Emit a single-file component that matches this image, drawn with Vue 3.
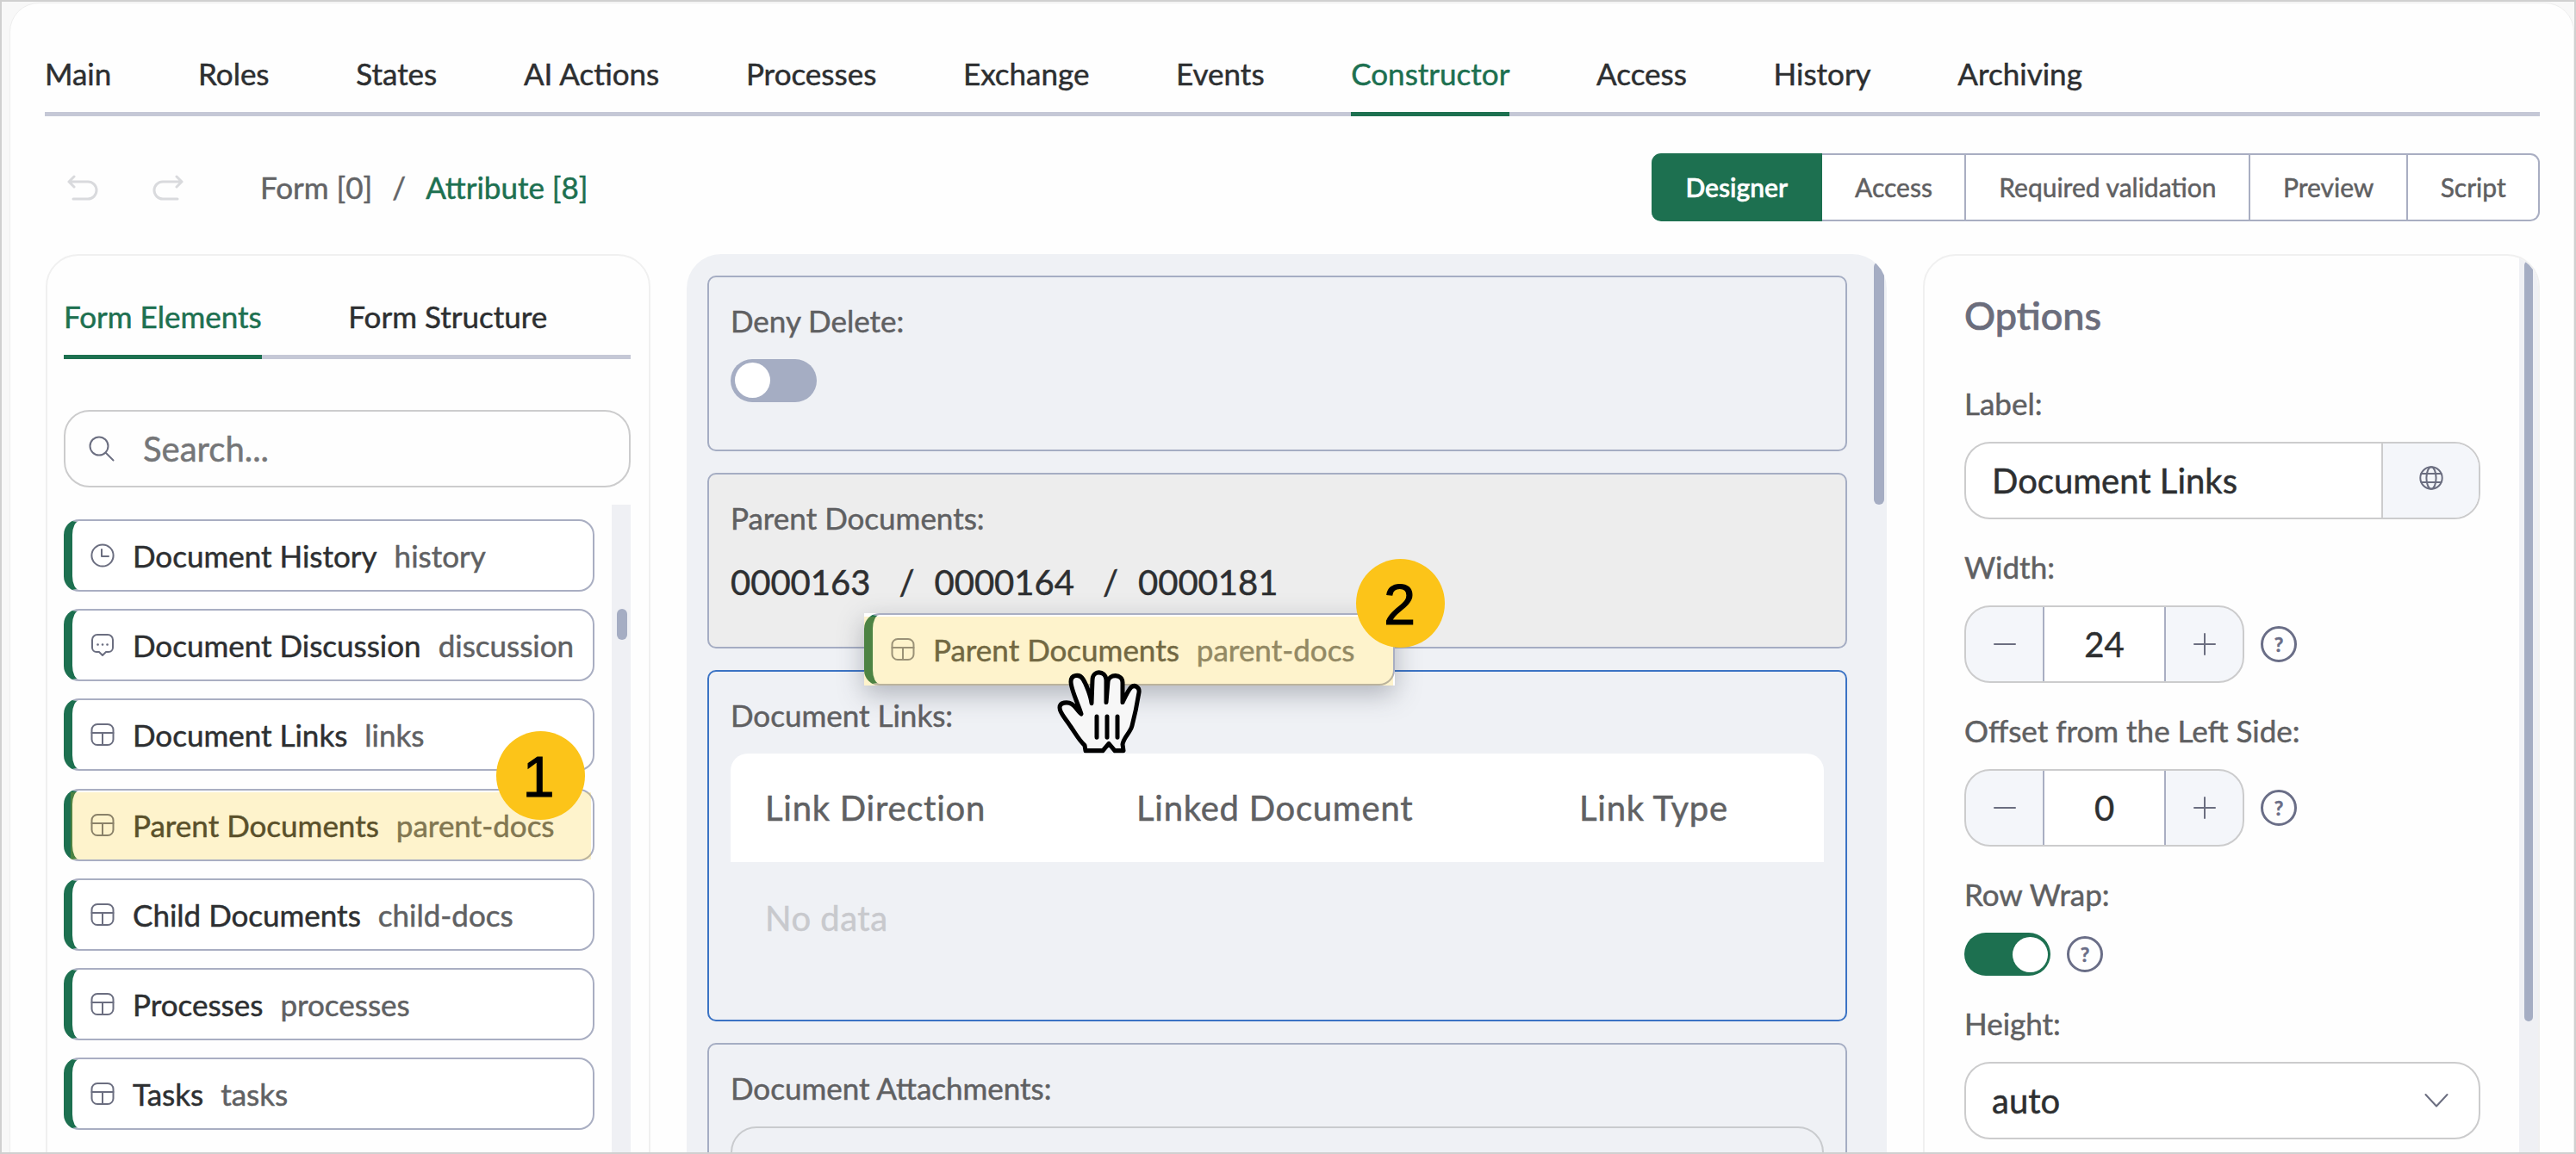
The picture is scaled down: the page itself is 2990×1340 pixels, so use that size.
<script setup>
import { ref } from "vue"

const tabs = ["Main", "Roles", "States", "AI Actions", "Processes", "Exchange", "Events", "Constructor", "Access", "History", "Archiving"]
const activeTab = ref("Constructor")

const modes = ["Designer", "Access", "Required validation", "Preview", "Script"]
const activeMode = ref("Designer")

const panelTabs = ["Form Elements", "Form Structure"]
const activePanelTab = ref("Form Elements")

const elements = [
    { icon: "clock", title: "Document History", code: "history" },
    { icon: "chat", title: "Document Discussion", code: "discussion" },
    { icon: "table", title: "Document Links", code: "links" },
    { icon: "table", title: "Parent Documents", code: "parent-docs", marked: true },
    { icon: "table", title: "Child Documents", code: "child-docs" },
    { icon: "table", title: "Processes", code: "processes" },
    { icon: "table", title: "Tasks", code: "tasks" }
]

const parents = ["0000163", "0000164", "0000181"]

const steppers = ref([
    { label: "Width:", value: 24 },
    { label: "Offset from the Left Side:", value: 0 }
])
</script>

<template>
    <div class="page">
        <div class="sheet">
            <nav class="tabs main-tabs">
                <a v-for="tab in tabs" :key="tab" class="tab" :class="{ active: tab === activeTab }"
                    @click="activeTab = tab">{{ tab }}</a>
            </nav>

            <div class="toolbar">
                <svg class="undo" width="36" height="30" viewBox="0 0 36 30">
                    <path d="M8 2 2 8l6 6M2 8h22a10 10 0 0 1 0 20H7" />
                </svg>
                <svg class="undo redo" width="36" height="30" viewBox="0 0 36 30">
                    <path d="M28 2l6 6-6 6M34 8H12a10 10 0 0 0 0 20h17" />
                </svg>
                <div class="crumbs">
                    <span>Form [0]</span>
                    <span class="slash">/</span>
                    <span class="current">Attribute [8]</span>
                </div>
                <div class="modes">
                    <button v-for="mode in modes" :key="mode" class="mode" :class="{ active: mode === activeMode }"
                        @click="activeMode = mode">{{ mode }}</button>
                </div>
            </div>

            <div class="columns">
                <aside class="panel left">
                    <nav class="tabs">
                        <a v-for="tab in panelTabs" :key="tab" class="tab" :class="{ active: tab === activePanelTab }"
                            @click="activePanelTab = tab">{{ tab }}</a>
                    </nav>
                    <div class="search">
                        <svg width="30" height="30" viewBox="0 0 30 30">
                            <circle cx="12" cy="12" r="10.5" />
                            <path d="M19.5 19.5 28.5 28.5" />
                        </svg>
                        <span>Search...</span>
                    </div>
                    <div class="list">
                        <div class="items">
                            <div v-for="item in elements" :key="item.code" class="item" :class="{ marked: item.marked }">
                                <svg class="icon" width="28" height="28" viewBox="0 0 28 28">
                                    <template v-if="item.icon === 'clock'">
                                        <circle cx="14" cy="14" r="12.6" />
                                        <path d="M13 7v8h8" />
                                    </template>
                                    <template v-else-if="item.icon === 'chat'">
                                        <path d="M8 2h12a6 6 0 0 1 6 6v9a5 5 0 0 1-5 5h-3l-4 4-4-4H7a5 5 0 0 1-5-5V8a6 6 0 0 1 6-6z" />
                                        <path class="dots" d="M8.5 13.5h.1M14 13.5h.1M19.5 13.5h.1" />
                                    </template>
                                    <template v-else>
                                        <rect x="1.5" y="2" width="25" height="24" rx="6.5" />
                                        <path d="M1.5 12h25M14 12v14" />
                                    </template>
                                </svg>
                                <span class="title">{{ item.title }}</span>
                                <span class="code">{{ item.code }}</span>
                            </div>
                        </div>
                        <div class="track"><div class="thumb"></div></div>
                    </div>
                </aside>

                <main class="canvas">
                    <section class="block deny">
                        <p class="label">Deny Delete:</p>
                        <div class="toggle"></div>
                    </section>
                    <section class="block parents">
                        <p class="label">Parent Documents:</p>
                        <div class="numbers">
                            <template v-for="(number, index) in parents" :key="number">
                                <span v-if="index" class="divider">/</span>
                                <span class="number">{{ number }}</span>
                            </template>
                        </div>
                    </section>
                    <section class="block links">
                        <p class="label">Document Links:</p>
                        <div class="table-head">
                            <span>Link Direction</span>
                            <span>Linked Document</span>
                            <span>Link Type</span>
                        </div>
                        <p class="empty">No data</p>
                    </section>
                    <section class="block attachments">
                        <p class="label">Document Attachments:</p>
                        <div class="dropzone"></div>
                    </section>
                    <div class="canvas-thumb"></div>
                </main>

                <aside class="panel right">
                    <div class="options">
                        <h2>Options</h2>
                        <div class="field">
                            <p class="label">Label:</p>
                            <div class="input">
                                <span class="value">Document Links</span>
                                <span class="addon">
                                    <svg width="28" height="28" viewBox="0 0 28 28">
                                        <circle cx="14" cy="14" r="12.7" />
                                        <ellipse cx="14" cy="14" rx="5.6" ry="12.7" />
                                        <path d="M2.5 9h23M2.5 19h23" />
                                    </svg>
                                </span>
                            </div>
                        </div>
                        <div v-for="step in steppers" :key="step.label" class="field">
                            <p class="label">{{ step.label }}</p>
                            <div class="line">
                                <div class="stepper">
                                    <span class="step" @click="step.value--">
                                        <svg width="26" height="26" viewBox="0 0 26 26"><path d="M1 13h24" /></svg>
                                    </span>
                                    <span class="count">{{ step.value }}</span>
                                    <span class="step" @click="step.value++">
                                        <svg width="26" height="26" viewBox="0 0 26 26"><path d="M1 13h24M13 1v24" /></svg>
                                    </span>
                                </div>
                                <span class="help">?</span>
                            </div>
                        </div>
                        <div class="field">
                            <p class="label">Row Wrap:</p>
                            <div class="line">
                                <div class="toggle on"></div>
                                <span class="help">?</span>
                            </div>
                        </div>
                        <div class="field">
                            <p class="label">Height:</p>
                            <div class="input select">
                                <span class="value">auto</span>
                                <svg width="28" height="18" viewBox="0 0 28 18"><path d="M1.5 2 14 15.5 26.5 2" /></svg>
                            </div>
                        </div>
                    </div>
                    <div class="track"><div class="thumb"></div></div>
                </aside>
            </div>
        </div>

        <div class="drag">
            <div class="item">
                <svg class="icon" width="28" height="28" viewBox="0 0 28 28">
                    <rect x="1.5" y="2" width="25" height="24" rx="6.5" />
                    <path d="M1.5 12h25M14 12v14" />
                </svg>
                <span class="title">Parent Documents</span>
                <span class="code">parent-docs</span>
            </div>
        </div>
        <svg class="hand" width="100" height="102" viewBox="0 0 100 98" preserveAspectRatio="none">
            <path class="skin" d="M34 91 33 85C26 79 22 71 16 63 10 54 4 49 4 43 4 37 13 36 18 39 23 42 25 47 29 50 26 40 17 23 17 14 17 6 27 5 31 11 35 17 40 30 41 38L42 12C42 1 57 1 58 12V37L60 14C61 5 77 5 77 15V37C79 33 83 24 87 20 91 17 97 20 96 26 94 38 91 52 88 63 86 71 78 76 77 84L78 91H68L61 83 54 91Z" />
            <path class="creases" d="M47 53v23M59 53v23M71 53v23" />
        </svg>
        <span class="badge one">1</span>
        <span class="badge two">2</span>
    </div>
</template>

<style>
body {
    margin: 0;
    background-color: #f8f8f8;
}
</style>

<style scoped>
* {
    box-sizing: border-box;
}

.page {
    position: relative;
    width: 2990px;
    height: 1340px;
    overflow: hidden;
    border: 2px solid #d0d0d0;
    background-color: #f8f8f8;
    color: #2d2f31;
    font-family: Lato, "Liberation Sans", sans-serif;
    font-size: 35px;
    line-height: 44px;
    -webkit-text-stroke: 0.5px currentColor;
}

p,
h2 {
    margin: 0;
}

svg {
    flex: none;
    fill: none;
    stroke: #6b6e80;
    stroke-width: 2;
    stroke-linecap: round;
    stroke-linejoin: round;
}

.sheet {
    height: 1400px;
    margin: 1px 0 0 9px;
    padding: 59px 39px 0 40px;
    border: 1px solid #eeeeee;
    border-radius: 34px 34px 0 0;
    background-color: #fefefe;
}

.tabs {
    display: flex;
    gap: 100.7px;
    height: 72px;
    border-bottom: 5px solid #c5c8d6;
}

.tab {
    height: 72px;
    white-space: nowrap;
}

.tab.active {
    border-bottom: 5px solid #1d7050;
    color: #1d7050;
}

.toolbar {
    display: flex;
    align-items: center;
    height: 79px;
    margin: 43px 0 38px;
}

.undo {
    margin-left: 26px;
    stroke: #d9dadd;
    stroke-width: 3;
}

.redo {
    margin-left: 63px;
}

.crumbs {
    display: flex;
    height: 45px;
    margin-left: 89px;
    color: #636466;
}

.slash {
    margin: 0 23px;
}

.current {
    color: #1d7050;
}

.modes {
    display: flex;
    height: 79px;
    margin-left: auto;
}

.mode {
    padding: 0 37.3px 1px 38px;
    border: 2px solid #a9aec2;
    border-left: 0;
    background-color: #ffffff;
    color: #5f6062;
    font: 30px Lato, sans-serif;
    -webkit-text-stroke: 0.5px currentColor;
}

.mode.active {
    padding: 0 38px 1px 39px;
    border-color: #1d7050;
    border-radius: 11px 0 0 11px;
    background-color: #1d7050;
    color: #ffffff;
    font-weight: 600;
}

.mode:last-child {
    border-radius: 0 11px 11px 0;
}

.columns {
    display: flex;
    gap: 42px;
    height: 1100px;
}

.panel {
    flex: none;
    overflow: hidden;
    border: 2px solid #f0f0f0;
    border-radius: 38px;
}

.left {
    width: 702px;
    margin-left: 1px;
    padding: 48px 21px 0 19px;
}

.search {
    display: flex;
    align-items: center;
    gap: 33px;
    height: 90px;
    margin: 59px 0 20px;
    padding-left: 27px;
    border: 2px solid #cccccd;
    border-radius: 30px;
    color: #757678;
    font-size: 40px;
}

.list {
    display: flex;
    justify-content: space-between;
    height: 900px;
}

.items {
    display: flex;
    flex-direction: column;
    gap: 20.2px;
    width: 616px;
    padding-top: 17px;
}

.item {
    position: relative;
    display: flex;
    flex: none;
    align-items: center;
    height: 84px;
    padding-left: 21px;
    border: 2px solid #a9aec2;
    border-left: 10px solid #1d7050;
    border-radius: 18px;
    background-color: #ffffff;
    white-space: nowrap;
}

.title {
    margin: 0 20px 0 21px;
}

.code {
    color: #606163;
}

.dots {
    stroke-width: 2.6;
}

.marked::after {
    content: "";
    position: absolute;
    inset: 2px 2px 0 -2px;
    background-color: rgba(252, 199, 25, 0.22);
}

.left .track {
    width: 22px;
    padding: 121px 4px 0 6px;
    background-color: #eff0f4;
}

.left .thumb {
    height: 36px;
    border-radius: 6px;
    background-color: #a5adc3;
}

.canvas {
    position: relative;
    display: flex;
    flex: none;
    flex-direction: column;
    gap: 25px;
    width: 1393px;
    padding: 25px 46px 0 24px;
    overflow: hidden;
    border-radius: 40px;
    background-color: #eff1f5;
}

.canvas-thumb {
    position: absolute;
    top: 9px;
    right: 3px;
    width: 12px;
    height: 282px;
    border-radius: 6px;
    background-color: #a5adc3;
}

.block {
    flex: none;
    height: 204px;
    padding: 28px 25px 0;
    border: 2px solid #a5adc3;
    border-radius: 10px;
}

.label {
    color: #5f6062;
}

.toggle {
    width: 100px;
    height: 50px;
    padding: 4px 5px;
    border-radius: 25px;
    background-color: #a5adc3;
}

.toggle::after {
    content: "";
    display: block;
    width: 41px;
    height: 41px;
    border-radius: 50%;
    background-color: #ffffff;
}

.toggle.on {
    padding: 5px 3px;
    background-color: #1d7050;
}

.toggle.on::after {
    margin-left: auto;
}

.deny .toggle {
    margin-top: 23px;
}

.parents {
    background-color: #ededed;
}

.numbers {
    display: flex;
    margin-top: 31px;
    font-size: 40px;
}

.divider {
    margin: 0 23px 0 33px;
}

.links {
    height: 408px;
    border-color: #3b73c4;
}

.table-head {
    display: grid;
    grid-template-columns: 431px 514px 1fr;
    align-items: center;
    height: 126px;
    margin-top: 23px;
    padding-left: 40px;
    border-radius: 20px 20px 0 0;
    background-color: #ffffff;
    color: #606163;
    font-size: 40px;
    letter-spacing: 0.75px;
}

.empty {
    margin: 43px 40px 0;
    color: #c8c9cd;
    font-size: 40px;
    letter-spacing: 0.5px;
}

.attachments {
    height: 300px;
}

.dropzone {
    height: 120px;
    margin-top: 23px;
    border: 2px solid #c9cbce;
    border-radius: 30px;
}

.right {
    display: flex;
    width: 716px;
}

.options {
    display: flex;
    flex-direction: column;
    flex: none;
    gap: 33px;
    width: 690px;
    padding: 43px 43px 0 46px;
}

h2 {
    margin-bottom: 20px;
    color: #6b6d7c;
    font-size: 45px;
    font-weight: 500;
    line-height: 53px;
    -webkit-text-stroke: 0.7px currentColor;
}

.field .label {
    margin-bottom: 23px;
}

.input {
    display: flex;
    align-items: center;
    width: 599px;
    height: 90px;
    overflow: hidden;
    padding-left: 30px;
    border: 2px solid #cccccd;
    border-radius: 30px;
    background-color: #ffffff;
    font-size: 40px;
}

.addon {
    display: flex;
    align-items: center;
    justify-content: center;
    width: 113px;
    height: 90px;
    margin-left: auto;
    border-left: 2px solid #cccccd;
    background-color: #f4f6fa;
}

.addon svg {
    margin-bottom: 6px;
}

.select {
    justify-content: space-between;
    padding-right: 35px;
}

.line {
    display: flex;
    align-items: center;
    gap: 19px;
}

.stepper {
    display: flex;
    width: 325px;
    height: 90px;
    overflow: hidden;
    border: 2px solid #cccccd;
    border-radius: 30px;
    background-color: #f4f6fa;
    font-size: 40px;
}

.step,
.count {
    display: flex;
    flex: 1;
    align-items: center;
    justify-content: center;
}

.count {
    flex: none;
    width: 143px;
    border: 2px solid #a9aec2;
    border-width: 0 2px;
    background-color: #ffffff;
}

.help {
    width: 42px;
    height: 42px;
    border: 3px solid #6a6e87;
    border-radius: 50%;
    color: #6a6e87;
    font-size: 23px;
    font-weight: 700;
    line-height: 36px;
    text-align: center;
}

.right .track {
    width: 24px;
    height: 1100px;
    padding: 6px 6px 0;
    background-color: #eff0f4;
}

.right .thumb {
    height: 883px;
    border-radius: 6px;
    background-color: #a5adc3;
}

.drag {
    position: absolute;
    top: 710px;
    left: 1001px;
    width: 616px;
    background-color: #ffffff;
    box-shadow: 0 10px 30px rgba(60, 65, 80, 0.35);
}

.drag .title,
.drag .code,
.drag .icon {
    opacity: 0.85;
}

.drag::after {
    content: "";
    position: absolute;
    inset: 4px 2px 0 0;
    background-color: rgba(252, 199, 25, 0.22);
}

.hand {
    position: absolute;
    top: 775px;
    left: 1224px;
}

.skin {
    fill: #f7f7f7;
    stroke: #000000;
    stroke-width: 5;
}

.creases {
    stroke: #000000;
    stroke-width: 5;
}

.badge {
    position: absolute;
    width: 103px;
    height: 103px;
    border-radius: 50%;
    background-color: #fcc419;
    color: #000000;
    font-family: "Liberation Sans", sans-serif;
    font-size: 66px;
    line-height: 106px;
    text-align: center;
    -webkit-text-stroke: 1.2px #000000;
}

.one {
    top: 847px;
    left: 574px;
    padding-right: 5px;
}

.two {
    top: 647px;
    left: 1572px;
    padding-right: 2px;
}
</style>
